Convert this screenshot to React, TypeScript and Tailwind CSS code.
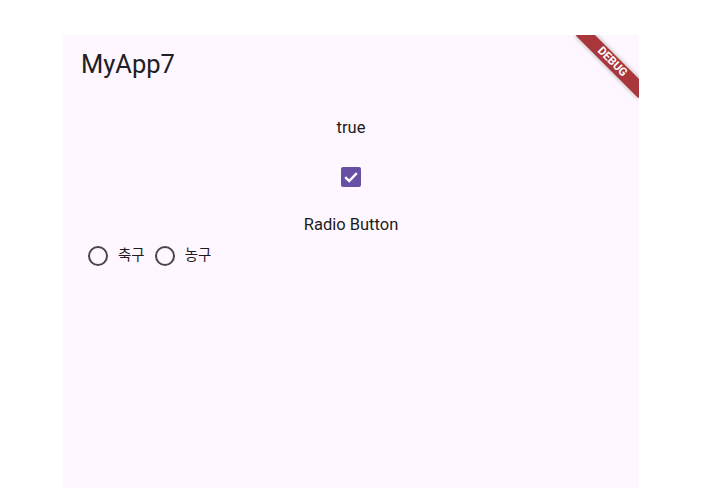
import React, { useState } from 'react';

const font = { fontFamily: 'Roboto, "Noto Sans CJK KR", sans-serif' };

const RadioItem = ({ label, checked, onClick }: { label: string; checked: boolean; onClick: () => void }) => (
    <div className="flex items-center cursor-pointer" onClick={onClick}>
        <div className="size-[40px] flex items-center justify-center">
            <div className="size-[20px] rounded-full border-[2px] border-[#49454F] flex items-center justify-center">
                {checked && <div className="size-[10px] rounded-full bg-[#6750A4]" />}
            </div>
        </div>
        <span className="text-[14.5px] text-[#1D1B20]">{label}</span>
    </div>
);

export default function App() {
    const [checked, setChecked] = useState(true);
    const [sport, setSport] = useState<string | null>(null);

    return (
        <div className="w-[716px] h-[504px] bg-white pt-[35px] pl-[63px]" style={font}>
            <div className="relative w-[576px] h-[453px] bg-[#FEF7FF] overflow-hidden">
                {/* AppBar */}
                <div className="h-[58px] flex items-center pl-[18px]">
                    <h1 className="text-[25.5px] leading-[30px] text-[#222025]">MyApp7</h1>
                </div>

                {/* Body */}
                <div className="flex flex-col items-center pt-[25px]">
                    <p className="text-[16.5px] leading-[20px] text-[#1D1B20]">{checked ? 'true' : 'false'}</p>
                    <button
                        onClick={() => setChecked(!checked)}
                        className="mt-[29px] size-[20px] rounded-[2px] bg-[#6750A4] flex items-center justify-center"
                    >
                        {checked && (
                            <svg width="20" height="20" viewBox="0 0 20 20" fill="none">
                                <path d="M4.2 10.2 L8.2 14 L15.8 6.2" stroke="white" strokeWidth="2.4" />
                            </svg>
                        )}
                    </button>
                    <p className="mt-[28px] text-[16.5px] leading-[20px] text-[#1D1B20]">Radio Button</p>
                    <div className="self-stretch flex items-center pl-[15px] mt-[1px]">
                        <RadioItem label="축구" checked={sport === 'soccer'} onClick={() => setSport('soccer')} />
                        <RadioItem label="농구" checked={sport === 'basketball'} onClick={() => setSport('basketball')} />
                    </div>
                </div>

                {/* DEBUG banner */}
                <div className="absolute left-[505px] top-[20px] w-[88px] h-[14px] rotate-45 bg-[#A8363A] shadow-[0_0_5px_rgba(0,0,0,0.35)] flex items-center justify-center">
                    <span className="text-[11.5px] leading-none font-bold text-white" style={{ fontFamily: 'Roboto, sans-serif' }}>DEBUG</span>
                </div>
            </div>
        </div>
    );
}
